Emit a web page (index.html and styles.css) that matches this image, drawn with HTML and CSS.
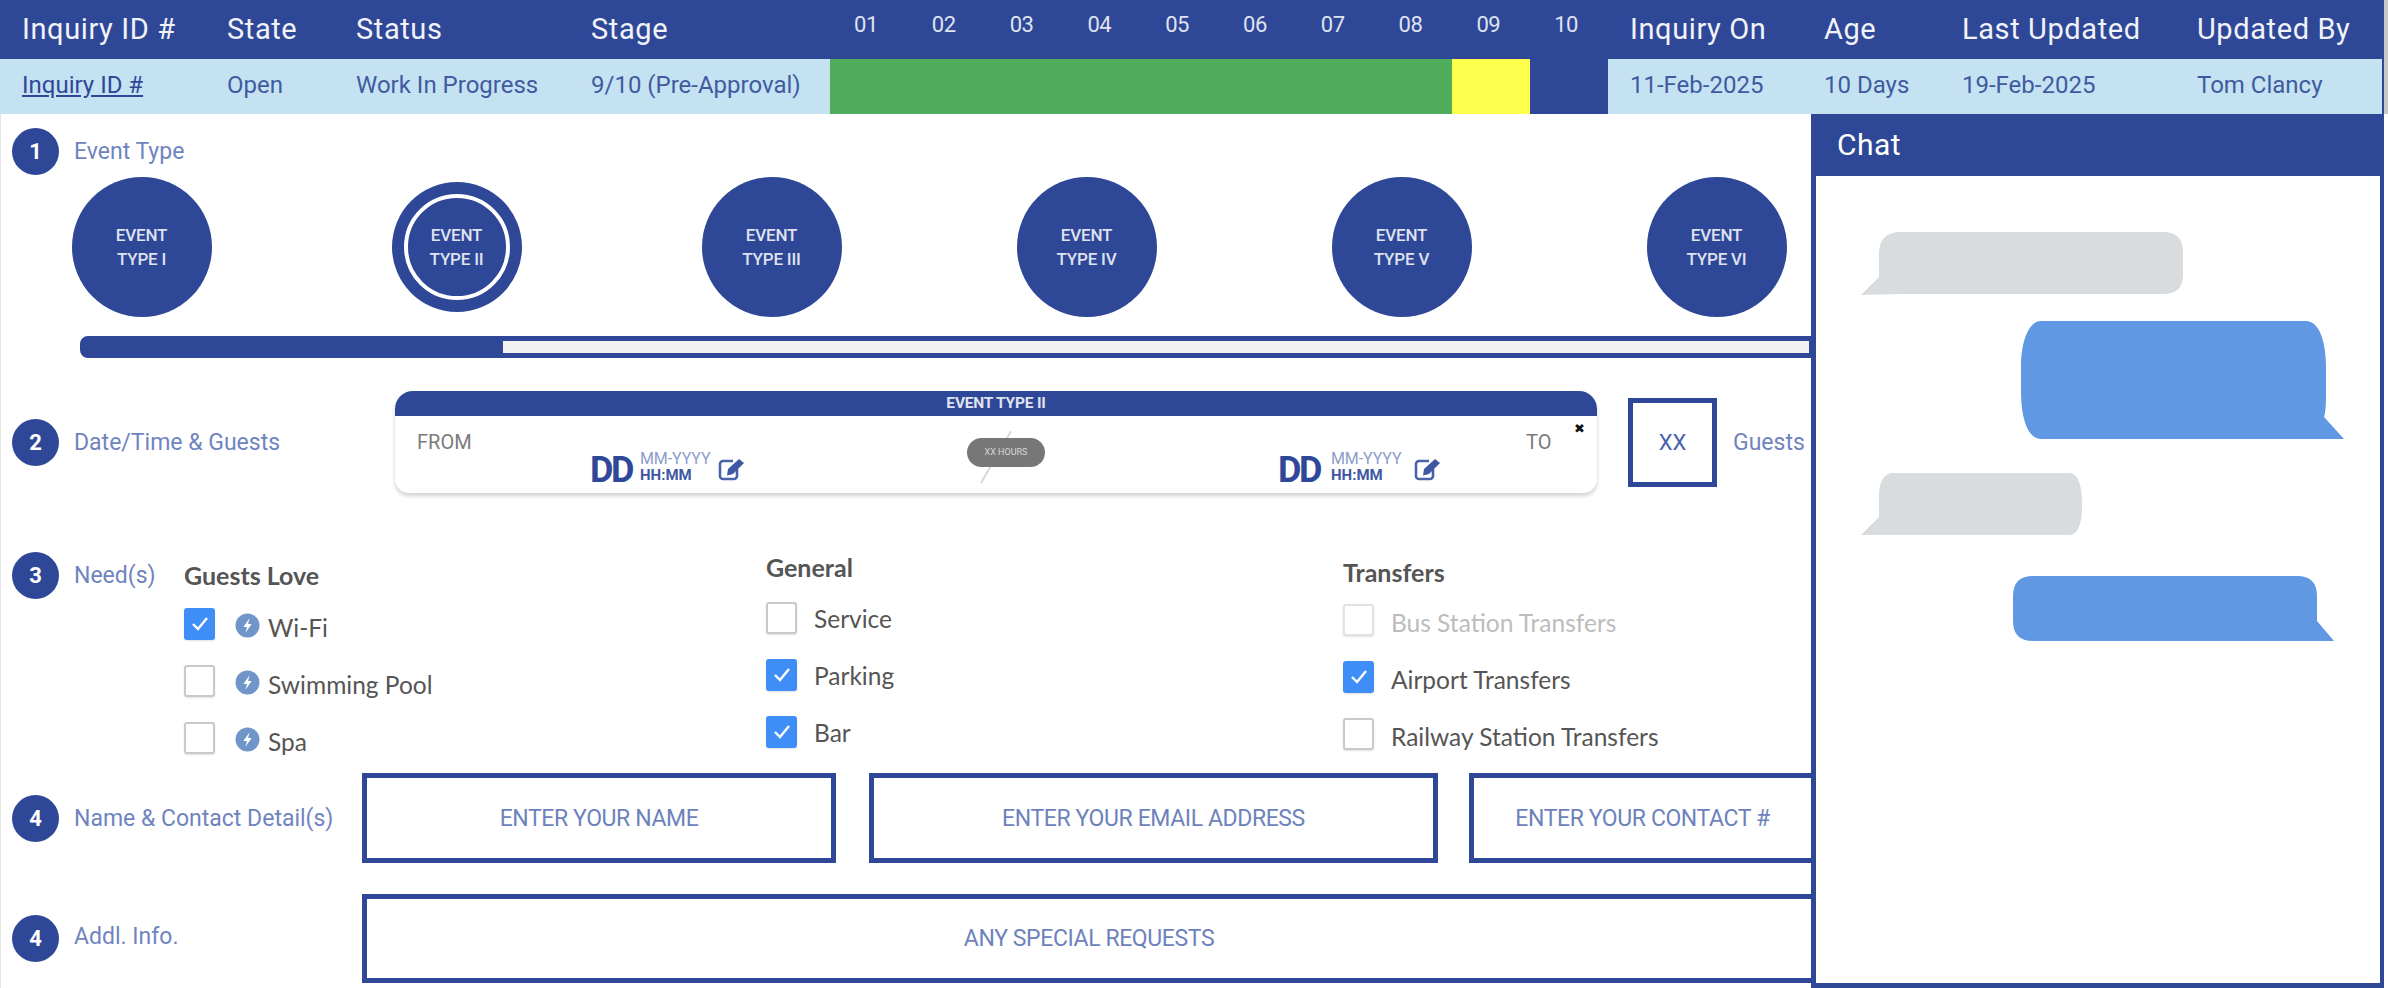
FILE: index.html
```html
<!DOCTYPE html>
<html lang="en">
<head>
<meta charset="utf-8">
<title>Inquiry</title>
<link rel="stylesheet" href="styles.css">
</head>
<body>
<div class="page">
  <div class="summary">
    <div class="hcell">Inquiry ID #</div>
    <div class="hcell">State</div>
    <div class="hcell">Status</div>
    <div class="hcell">Stage</div>
    <div class="num">01</div><div class="num">02</div><div class="num">03</div><div class="num">04</div><div class="num">05</div>
    <div class="num">06</div><div class="num">07</div><div class="num">08</div><div class="num">09</div><div class="num">10</div>
    <div class="hcell">Inquiry On</div>
    <div class="hcell">Age</div>
    <div class="hcell">Last Updated</div>
    <div class="hcell">Updated By</div>

    <div class="cell"><a class="id-link" href="#">Inquiry ID #</a></div>
    <div class="cell">Open</div>
    <div class="cell">Work In Progress</div>
    <div class="cell">9/10 (Pre-Approval)</div>
    <div class="progress-done"></div>
    <div class="progress-now"></div>
    <div class="progress-todo"></div>
    <div class="cell">11-Feb-2025</div>
    <div class="cell">10 Days</div>
    <div class="cell">19-Feb-2025</div>
    <div class="cell">Tom Clancy</div>
  </div>

  <div class="main">
    <div class="form">
      <div class="step step-event">
        <span class="badge">1</span><span class="step-label">Event Type</span>
      </div>
      <div class="types">
        <div class="type">EVENT<br>TYPE I</div>
        <div class="type type-active"><div class="type-ring">EVENT<br>TYPE II</div></div>
        <div class="type">EVENT<br>TYPE III</div>
        <div class="type">EVENT<br>TYPE IV</div>
        <div class="type">EVENT<br>TYPE V</div>
        <div class="type">EVENT<br>TYPE VI</div>
      </div>
      <div class="bar"><div class="bar-fill"></div></div>

      <div class="row row-date">
        <div class="step head-date"><span class="badge">2</span><span class="step-label">Date/Time &amp; Guests</span></div>
        <div class="card">
          <div class="card-title">EVENT TYPE II</div>
          <div class="card-body">
            <div class="end-label">FROM</div>
            <div class="date">
              <span class="dd">DD</span>
              <span class="date-parts"><span class="my">MM-YYYY</span><span class="hm">HH:MM</span></span>
              <svg class="edit" viewBox="0 0 28 24"><path d="M19 12v7a3 3 0 0 1-3 3H5a3 3 0 0 1-3-3V7a3 3 0 0 1 3-3h10" fill="none" stroke="#4a62ab" stroke-width="2.6"/><path d="M10 12 21 2l5 4-11 11-6 1.5z" fill="#3f58a4"/></svg>
            </div>
            <div class="pill-wrap">
              <span class="slash"></span>
              <span class="pill">XX HOURS</span>
            </div>
            <div class="date date-b">
              <span class="dd">DD</span>
              <span class="date-parts"><span class="my">MM-YYYY</span><span class="hm">HH:MM</span></span>
              <svg class="edit" viewBox="0 0 28 24"><path d="M19 12v7a3 3 0 0 1-3 3H5a3 3 0 0 1-3-3V7a3 3 0 0 1 3-3h10" fill="none" stroke="#4a62ab" stroke-width="2.6"/><path d="M10 12 21 2l5 4-11 11-6 1.5z" fill="#3f58a4"/></svg>
            </div>
            <div class="end-label">TO</div>
            <span class="close">✖</span>
          </div>
        </div>
        <div class="guests-box">XX</div>
        <div class="step-label guests-label">Guests</div>
      </div>

      <div class="row row-needs">
        <div class="step head-needs"><span class="badge">3</span><span class="step-label">Need(s)</span></div>
        <div class="col col-love">
          <div class="col-title">Guests Love</div>
          <label class="opt"><span class="cb cb-on"><svg viewBox="0 0 31 31"><path d="M9 16l5 5 9-11" fill="none" stroke="#fff" stroke-width="2.4"/></svg></span><svg class="bolt" viewBox="0 0 24 24"><circle cx="12" cy="12" r="11.5" fill="#7095c8"/><path d="M14 5 8 13.5h3.5L10 19l6-8.5h-3.5z" fill="#fff"/></svg><span class="opt-text">Wi-Fi</span></label>
          <label class="opt"><span class="cb"></span><svg class="bolt" viewBox="0 0 24 24"><circle cx="12" cy="12" r="11.5" fill="#7095c8"/><path d="M14 5 8 13.5h3.5L10 19l6-8.5h-3.5z" fill="#fff"/></svg><span class="opt-text">Swimming Pool</span></label>
          <label class="opt"><span class="cb"></span><svg class="bolt" viewBox="0 0 24 24"><circle cx="12" cy="12" r="11.5" fill="#7095c8"/><path d="M14 5 8 13.5h3.5L10 19l6-8.5h-3.5z" fill="#fff"/></svg><span class="opt-text">Spa</span></label>
        </div>
        <div class="col col-general">
          <div class="col-title">General</div>
          <label class="opt"><span class="cb"></span><span class="opt-text">Service</span></label>
          <label class="opt"><span class="cb cb-on"><svg viewBox="0 0 31 31"><path d="M9 16l5 5 9-11" fill="none" stroke="#fff" stroke-width="2.4"/></svg></span><span class="opt-text">Parking</span></label>
          <label class="opt"><span class="cb cb-on"><svg viewBox="0 0 31 31"><path d="M9 16l5 5 9-11" fill="none" stroke="#fff" stroke-width="2.4"/></svg></span><span class="opt-text">Bar</span></label>
        </div>
        <div class="col col-transfers">
          <div class="col-title">Transfers</div>
          <label class="opt opt-disabled"><span class="cb"></span><span class="opt-text">Bus Station Transfers</span></label>
          <label class="opt"><span class="cb cb-on"><svg viewBox="0 0 31 31"><path d="M9 16l5 5 9-11" fill="none" stroke="#fff" stroke-width="2.4"/></svg></span><span class="opt-text">Airport Transfers</span></label>
          <label class="opt"><span class="cb"></span><span class="opt-text">Railway Station Transfers</span></label>
        </div>
      </div>

      <div class="row row-contact">
        <div class="step head-contact"><span class="badge">4</span><span class="step-label">Name &amp; Contact Detail(s)</span></div>
        <div class="field field-name">ENTER YOUR NAME</div>
        <div class="field field-email">ENTER YOUR EMAIL ADDRESS</div>
        <div class="field field-phone">ENTER YOUR CONTACT #</div>
      </div>

      <div class="row row-info">
        <div class="step head-contact"><span class="badge">4</span><span class="step-label step-label-up">Addl. Info.</span></div>
        <div class="field field-info">ANY SPECIAL REQUESTS</div>
      </div>
    </div>

    <aside class="chat">
      <div class="chat-head">Chat</div>
      <div class="chat-body">
        <svg class="msg msg-a" width="322" height="63" viewBox="0 0 322 63"><path d="M18 22Q18 0 40 0H302Q322 0 322 20V43Q322 62 302 62H40L0 63 18 45Z" fill="#d8dcdf"/></svg>
        <svg class="msg msg-b" width="323" height="118" viewBox="0 0 323 118"><path d="M20 0H285C298 0 305 20 305 46V75Q305 90 303 96L323 118H20C8 118 0 100 0 70V46C0 20 8 0 20 0Z" fill="#6198e4"/></svg>
        <svg class="msg msg-c" width="221" height="62" viewBox="0 0 221 62"><path d="M18 22C18 8 24 0 32 0H208C216 0 221 10 221 30V35C221 52 216 62 208 62H0L18 44Z" fill="#d8dcdf"/></svg>
        <svg class="msg msg-d" width="321" height="65" viewBox="0 0 321 65"><path d="M20 0H284Q304 0 304 20V45L321 65H20Q0 65 0 45V20Q0 0 20 0Z" fill="#6198e4"/></svg>
      </div>
    </aside>
  </div>
</div>
</body>
</html>
```

FILE: styles.css
```css
* { box-sizing: border-box; }

html, body {
  margin: 0;
  padding: 0;
  background: #fff;
}

body {
  font-family: Roboto, "Liberation Sans", sans-serif;
  color: #2f4797;
}

.page {
  width: 2388px;
  height: 988px;
  overflow: hidden;
  display: flex;
  flex-direction: column;
}

/* Summary table */
.summary {
  width: 2388px;
  background: #2f4797;
  border-right: 4px solid #c8c8c8;
  display: grid;
  grid-template-columns: 205px 129px 235px 261px repeat(10, 77.8px) 194px 138px 235px 207px;
  grid-template-rows: 59px 55px;
  flex: none;
}

.hcell {
  color: #f1f3f9;
  font-size: 29px;
  letter-spacing: 0.6px;
  line-height: 59px;
  padding-left: 22px;
  white-space: nowrap;
}

.num {
  color: #dfe3f0;
  font-size: 22px;
  line-height: 50px;
  text-align: center;
  padding-right: 6px;
  letter-spacing: -0.5px;
}

.cell {
  background: #c5e2f2;
  color: #3f5ba0;
  font-size: 24px;
  line-height: 53px;
  padding-left: 22px;
  white-space: nowrap;
}

.id-link { color: #2f4797; }

.progress-done { grid-column: span 8; background: #4fac5b; }
.progress-now { background: #ffff4d; }
.progress-todo { background: #2f4797; }

/* Main area */
.main {
  flex: 1;
  display: flex;
  min-height: 0;
}

.form {
  width: 1811px;
  flex: none;
  overflow: hidden;
  padding-left: 12px;
  border-left: 1px solid #e2e2e2;
}

.step {
  display: flex;
  align-items: center;
  flex: none;
}

.badge {
  width: 47px;
  height: 47px;
  border-radius: 50%;
  background: #2f4797;
  color: #fff;
  font-size: 22px;
  font-weight: 700;
  display: flex;
  align-items: center;
  justify-content: center;
  flex: none;
}

.step-label {
  margin-left: 15px;
  font-size: 23px;
  color: #6f84bf;
  white-space: nowrap;
}

.step-label-up { margin-top: -5px; }

.step-event { margin-top: 14px; height: 47px; margin-left: -1px; }

/* Event types */
.types {
  display: grid;
  grid-template-columns: repeat(6, 315px);
  justify-items: center;
  align-items: center;
  margin: 2px 0 0 -29px;
  height: 140px;
}

.type {
  width: 140px;
  height: 140px;
  border-radius: 50%;
  background: #2f4797;
  color: #dfe3f0;
  font-size: 17px;
  font-weight: 500;
  line-height: 24px;
  letter-spacing: -0.2px;
  text-align: center;
  display: flex;
  align-items: center;
  justify-content: center;
}

.type-active {
  width: 130px;
  height: 130px;
}

.type-ring {
  width: 106px;
  height: 106px;
  border-radius: 50%;
  border: 4px solid #fff;
  display: flex;
  align-items: center;
  justify-content: center;
}

.bar {
  margin: 19px 0 0 67px;
  height: 22px;
  border: 5px solid #2f4797;
  border-right-width: 2px;
  border-radius: 8px 0 0 8px;
  background: #f2f2f2;
}

.bar-fill {
  width: 418px;
  height: 100%;
  background: #2f4797;
}

/* Rows */
.row {
  display: flex;
  align-items: center;
}

.row-date { margin-top: 33px; height: 102px; margin-left: -1px; }
.head-date { width: 383px; }

.card {
  width: 1202px;
  height: 102px;
  border-radius: 18px 18px 14px 14px;
  background: #fff;
  box-shadow: 0 3px 4px rgba(0, 0, 0, .18);
  display: flex;
  flex-direction: column;
  flex: none;
}

.card-title {
  height: 25px;
  background: #2f4797;
  border-radius: 18px 18px 0 0;
  color: #dfe3f0;
  font-size: 15.5px;
  font-weight: 700;
  line-height: 25px;
  letter-spacing: -0.2px;
  text-align: center;
  flex: none;
}

.card-body {
  position: relative;
  flex: 1;
  display: grid;
  grid-template-columns: 173px 377px 311px 248px 1fr;
  padding-left: 22px;
  align-items: start;
}

.end-label {
  margin-top: 14px;
  font-size: 20px;
  line-height: 24px;
  color: #7b7b7b;
}

.date {
  margin-top: 34px;
  display: flex;
  align-items: flex-start;
}

.dd {
  font-size: 36px;
  font-weight: 700;
  line-height: 36px;
  letter-spacing: -2.5px;
  color: #2f4797;
  width: 50px;
  margin-top: 2px;
}

.date-parts {
  display: flex;
  flex-direction: column;
  width: 78px;
}

.date-b .date-parts { margin-left: 3px; }
.date-b .edit { margin-left: 5px; }

.my {
  font-size: 16px;
  line-height: 17px;
  color: #8c9ccb;
  letter-spacing: -0.1px;
}

.hm {
  font-size: 15px;
  line-height: 17px;
  font-weight: 700;
  color: #3f58a4;
}

.edit {
  width: 28px;
  height: 24px;
  margin-top: 7px;
  flex: none;
}

.pill-wrap {
  position: relative;
  margin-top: 22px;
  width: 78px;
  height: 29px;
}

.pill {
  position: absolute;
  inset: 0;
  background: #777;
  border-radius: 15px;
  color: #d8d8d8;
  font-size: 9px;
  line-height: 29px;
  text-align: center;
}

.slash {
  position: absolute;
  left: 28px;
  top: -11px;
  width: 1.5px;
  height: 60px;
  background: #d9d9d9;
  transform: rotate(30deg);
}

.close {
  position: absolute;
  right: 12px;
  top: 5px;
  font-size: 13px;
  line-height: 16px;
  color: #111;
}

.guests-box {
  margin-left: 31px;
  width: 89px;
  height: 89px;
  border: 5px solid #2f4797;
  font-size: 22px;
  color: #4a62ab;
  display: flex;
  align-items: center;
  justify-content: center;
  flex: none;
}

.guests-label { margin-left: 16px; }

/* Needs */
.row-needs {
  margin-top: 59px;
  height: 221px;
  align-items: flex-start;
  margin-left: -1px;
}

.head-needs { width: 172px; }

.col { display: flex; flex-direction: column; gap: 25px; }
.col-love { width: 582px; padding-top: 11px; }
.col-general { width: 577px; padding-top: 3px; }
.col-transfers { padding-top: 8px; }

.col-title {
  font-family: Lato, sans-serif;
  font-size: 25px;
  font-weight: 700;
  line-height: 24px;
  color: #555;
  margin-bottom: -4px;
}

.col-general .col-title { margin-bottom: -2px; }
.col-transfers .col-title { margin-bottom: -5px; }

.opt {
  display: flex;
  align-items: center;
  height: 32px;
  font-family: Lato, sans-serif;
  font-size: 24.5px;
  color: #555;
  white-space: nowrap;
}

.opt-disabled { color: #bcbcbc; }
.opt-disabled .cb { border-color: #e2e2e2; }

.cb {
  width: 31px;
  height: 32px;
  border: 2px solid #c9c9c9;
  border-radius: 3px;
  background: #fff;
  box-shadow: 0 1px 2px rgba(0, 0, 0, .12);
  flex: none;
  margin-right: 17px;
  display: block;
}

.cb svg { display: block; width: 31px; height: 31px; margin: -2px; }
.cb-on { background: #3f8ef7; border-color: #3f8ef7; }

.bolt {
  width: 25px;
  height: 25px;
  margin: 3px 8px 0 3px;
  flex: none;
}

.col-love .opt-text { margin-top: 6px; }
.col-transfers .opt-text { margin-top: 5px; }

/* Fields */
.row-contact { height: 90px; margin-left: -1px; }
.row-info { margin-top: 31px; height: 89px; margin-left: -1px; }
.head-contact { width: 350px; }

.field {
  height: 100%;
  border: 5px solid #2f4797;
  color: #6d82bc;
  font-size: 23px;
  letter-spacing: -0.4px;
  display: flex;
  align-items: center;
  justify-content: center;
  flex: none;
  white-space: nowrap;
}

.field-name { width: 474px; }
.field-email { width: 569px; margin-left: 33px; }
.field-phone { width: 342px; margin-left: 31px; border-right: 0; }
.field-info { width: 1449px; border-right: 0; }

/* Chat */
.chat {
  width: 573px;
  flex: none;
  display: flex;
  flex-direction: column;
  border: solid #2f4797;
  border-width: 0 4px 5px 5px;
  background: #fff;
}

.chat-head {
  height: 62px;
  flex: none;
  background: #2f4797;
  color: #fff;
  font-size: 30px;
  letter-spacing: 0.5px;
  line-height: 61px;
  padding-left: 21px;
}

.chat-body {
  flex: 1;
  display: flex;
  flex-direction: column;
  padding: 0 36px 0 45px;
}

.msg { display: block; flex: none; }
.msg-a { margin-top: 56px; }
.msg-b { margin-top: 26px; align-self: flex-end; }
.msg-c { margin-top: 34px; }
.msg-d { margin-top: 41px; align-self: flex-end; margin-right: 10px; }
```
